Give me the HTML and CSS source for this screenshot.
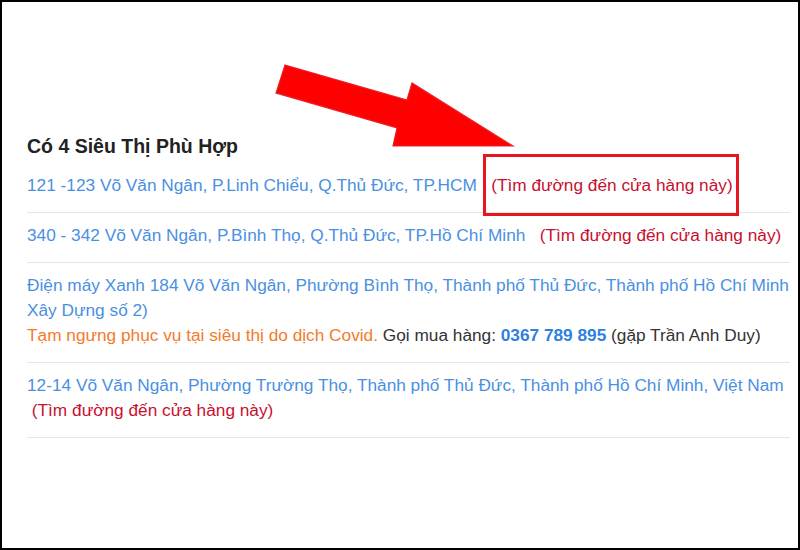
FILE: index.html
```html
<!DOCTYPE html>
<html lang="vi">
<head>
<meta charset="utf-8">
<link rel="stylesheet" href="styles.css">
</head>
<body>
<div class="frame">
  <h3 class="title">Có 4 Siêu Thị Phù Hợp</h3>
  <ul class="stores">
    <li class="store">
      <a class="addr">121 -123 Võ Văn Ngân, P.Linh Chiểu, Q.Thủ Đức, TP.HCM</a>&nbsp;&nbsp;&nbsp;<a class="route">(Tìm đường đến cửa hàng này)</a>
    </li>
    <li class="store">
      <a class="addr">340 - 342 Võ Văn Ngân, P.Bình Thọ, Q.Thủ Đức, TP.Hồ Chí Minh</a>&nbsp;&nbsp;&nbsp;<a class="route">(Tìm đường đến cửa hàng này)</a>
    </li>
    <li class="store">
      <a class="addr"><span class="nowrap">Điện máy Xanh 184 Võ Văn Ngân, Phường Bình Thọ, Thành phố Thủ Đức, Thành phố Hồ Chí Minh</span><br>Xây Dựng số 2)</a><br>
      <span class="notice">Tạm ngưng phục vụ tại siêu thị do dịch Covid.</span> <span class="plain">Gọi mua hàng: <b class="phone">0367 789 895</b> (gặp Trần Anh Duy)</span>
    </li>
    <li class="store">
      <a class="addr"><span class="nowrap">12-14 Võ Văn Ngân, Phường Trường Thọ, Thành phố Thủ Đức, Thành phố Hồ Chí Minh, Việt Nam</span></a><br>&nbsp;<a class="route">(Tìm đường đến cửa hàng này)</a>
    </li>
  </ul>
  <div class="highlight"></div>
  <svg class="arrow" width="800" height="550" viewBox="0 0 800 550">
    <polygon points="285,65 407,100 412,83 513,146 393,146 397,128 276,93" fill="#fe0000" stroke="#e8202c" stroke-width="1.2" stroke-linejoin="miter"/>
  </svg>
</div>
</body>
</html>
```
FILE: styles.css
```css
html, body {
  margin: 0;
  padding: 0;
  background: #fff;
}
.frame {
  position: relative;
  width: 800px;
  height: 550px;
  box-sizing: border-box;
  border: 2px solid #000;
  padding: 132px 8px 0 25px;
  font-family: "Liberation Sans", Arial, sans-serif;
  overflow: hidden;
}
.title {
  margin: 0 0 5px;
  font-size: 19.5px;
  line-height: 24px;
  font-weight: bold;
  color: #222;
}
.stores {
  list-style: none;
  margin: 0;
  padding: 0;
}
.store {
  padding: 10px 0 14px;
  border-bottom: 1px solid #e6e6e6;
  font-size: 17.25px;
  line-height: 25px;
  color: #333;
}
.nowrap {
  white-space: nowrap;
}
.addr {
  color: #4a90e2;
  text-decoration: none;
}
.route {
  color: #c8102e;
  text-decoration: none;
}
.notice {
  color: #f37b2b;
}
.plain {
  color: #333;
}
.phone {
  color: #2f80e0;
}
.highlight {
  position: absolute;
  left: 481px;
  top: 152px;
  width: 256px;
  height: 62px;
  box-sizing: border-box;
  border: 3px solid #e8141e;
}
.arrow {
  position: absolute;
  left: -2px;
  top: -2px;
  pointer-events: none;
}
```
